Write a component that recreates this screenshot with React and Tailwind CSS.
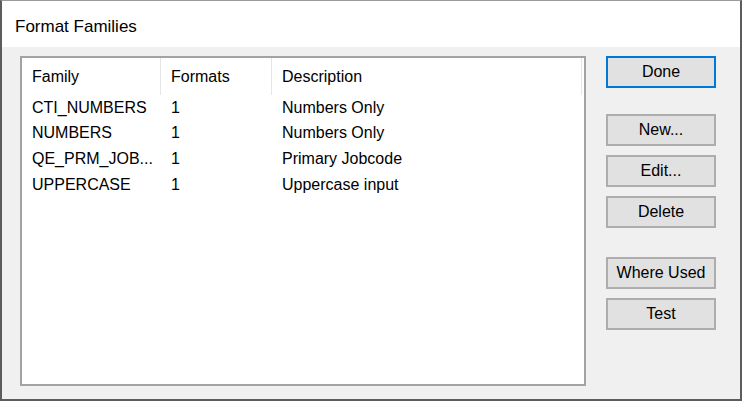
import React from 'react';

const rows = [
  { family: 'CTI_NUMBERS', formats: '1', description: 'Numbers Only' },
  { family: 'NUMBERS', formats: '1', description: 'Numbers Only' },
  { family: 'QE_PRM_JOB...', formats: '1', description: 'Primary Jobcode' },
  { family: 'UPPERCASE', formats: '1', description: 'Uppercase input' },
];

function Btn({ children, primary, className = '' }) {
  return (
    <button
      className={`w-[110px] h-[32px] flex items-center justify-center bg-[#e1e1e1] text-[16px] text-black leading-none ${
        primary ? 'border-2 border-[#0078d7]' : 'border-2 border-[#adadad]'
      } ${className}`}
    >
      {children}
    </button>
  );
}

export default function App() {
  return (
    <div
      className="w-[742px] h-[401px] flex flex-col border-x-2 border-b-2 border-t border-[#5c5c5c] border-t-[#9a9a9a] bg-white text-black select-none"
      style={{ fontFamily: '"Liberation Sans", Arial, sans-serif' }}
    >
      {/* Title */}
      <div className="h-[46px] shrink-0 bg-white flex items-center pl-[13px] pt-[6px] text-[17px]">
        Format Families
      </div>

      {/* Body */}
      <div className="flex-1 bg-[#f0f0f0] flex pl-[18px] pt-[9px]">
        {/* List */}
        <div className="w-[566px] h-[330px] bg-white border-2 border-[#a3a3a3] text-[16px]">
          <div className="h-[37px] flex items-center">
            <div className="w-[139px] h-full flex items-center pl-[10px] border-r border-[#e5e5e5]">Family</div>
            <div className="w-[111px] h-full flex items-center pl-[10px] border-r border-[#e5e5e5]">Formats</div>
            <div className="w-[310px] h-full flex items-center pl-[10px] border-r border-[#e5e5e5]">Description</div>
          </div>
          {rows.map((r, i) => (
            <div key={i} className="h-[25.6px] flex items-center">
              <div className="w-[139px] pl-[10px] whitespace-nowrap">{r.family}</div>
              <div className="w-[111px] pl-[10px]">{r.formats}</div>
              <div className="pl-[10px]">{r.description}</div>
            </div>
          ))}
        </div>

        {/* Buttons */}
        <div className="ml-[20px] flex flex-col">
          <Btn primary>Done</Btn>
          <Btn className="mt-[26px]">New...</Btn>
          <Btn className="mt-[9px]">Edit...</Btn>
          <Btn className="mt-[9px]">Delete</Btn>
          <Btn className="mt-[29px]">Where Used</Btn>
          <Btn className="mt-[9px]">Test</Btn>
        </div>
      </div>
    </div>
  );
}
